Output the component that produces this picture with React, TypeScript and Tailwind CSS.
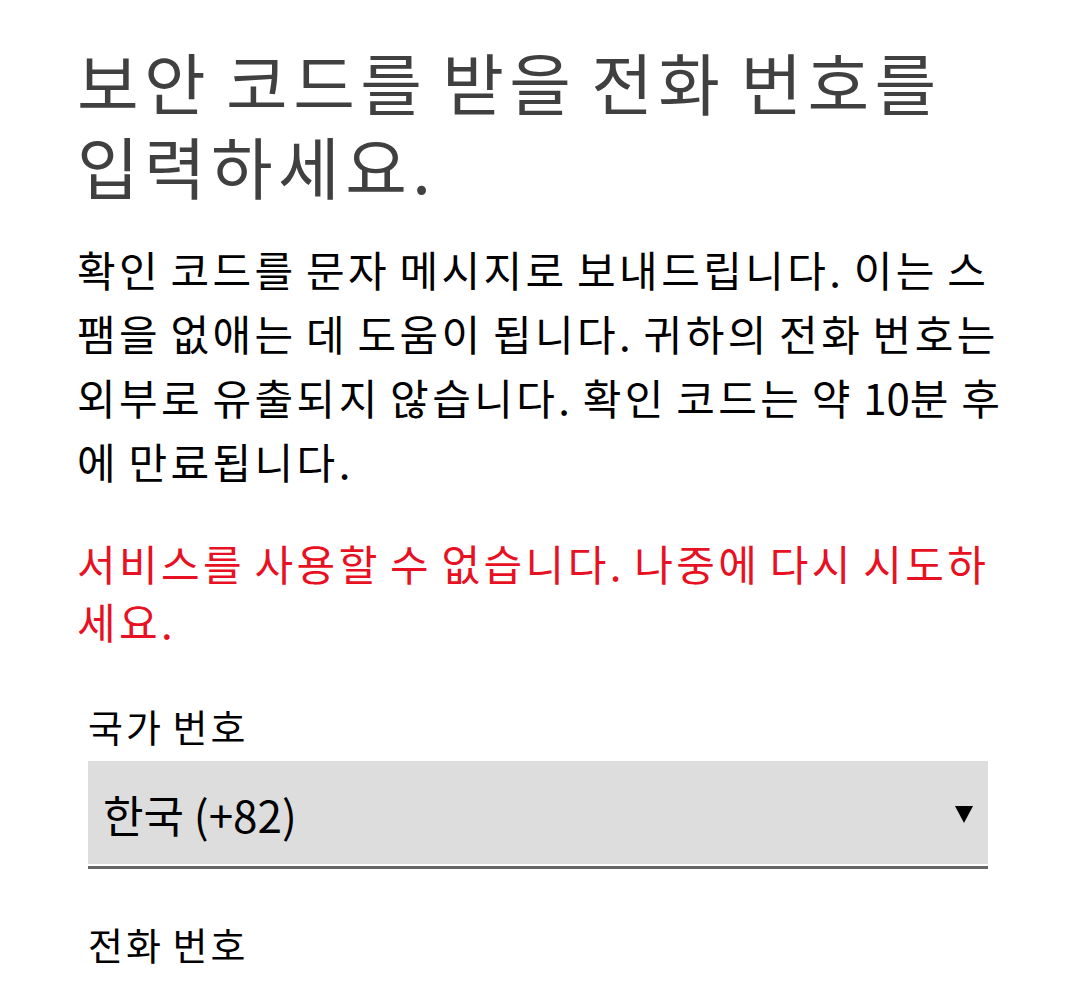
import React from 'react';

const font = { fontFamily: '"Noto Sans CJK SC", "Noto Sans CJK KR", "Noto Sans", sans-serif' };

const FieldLabel: React.FC<{ children: React.ReactNode }> = ({ children }) => (
  <label className="block text-[38px] leading-[40px] tracking-[3px] [word-spacing:-3px] text-black">
    {children}
  </label>
);

export default function App() {
  return (
    <div className="min-h-screen bg-white" style={font}>
      <div className="ml-[77px] w-[930px] pt-[39px]">
        {/* Heading */}
        <h1 className="text-[67px] leading-[84px] font-normal tracking-[5.4px] [word-spacing:-5.4px] text-[#404040]">
          보안 코드를 받을 전화 번호를 입력하세요.
        </h1>

        {/* Description */}
        <p className="mt-[30px] text-[42px] leading-[64px] tracking-[3.4px] [word-spacing:-3.4px] text-black">
          확인 코드를 문자 메시지로 보내드립니다. 이는 스팸을 없애는 데 도움이 됩니다. 귀하의 전화 번호는 외부로 유출되지 않습니다. 확인 코드는 약 <span className="tracking-normal">10</span>분 후에 만료됩니다.
        </p>

        {/* Error */}
        <p className="mt-[41px] text-[42px] leading-[58px] tracking-[3.4px] [word-spacing:-3.4px] text-[#e81123]">
          서비스를 사용할 수 없습니다. 나중에 다시 시도하세요.
        </p>

        {/* Form */}
        <div className="mt-[56px] pl-[11px]">
          <FieldLabel>국가 번호</FieldLabel>
          <div className="mt-[15px] w-[900px] border-b-[3px] border-[#666666]">
            <div className="mb-[2px] flex h-[103px] items-start justify-between bg-[#dddddd] pl-[15px] pr-[15px] pt-[31px]">
              <span className="text-[44px] leading-[44px] text-black">한국 (+82)</span>
              <svg className="mt-[14px]" width="18" height="17" viewBox="0 0 18 17">
                <polygon points="0,0 18,0 9,17" fill="#000" />
              </svg>
            </div>
          </div>
          <div className="mt-[55px]">
            <FieldLabel>전화 번호</FieldLabel>
          </div>
        </div>
      </div>
    </div>
  );
}
